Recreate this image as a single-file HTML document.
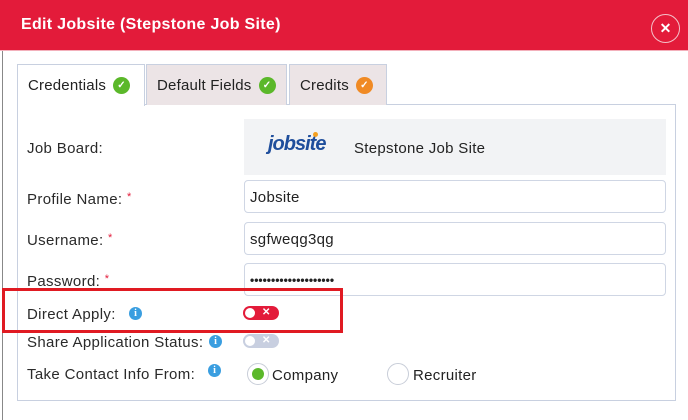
<!DOCTYPE html>
<html><head><style>
*{box-sizing:border-box;margin:0;padding:0}
body{width:688px;height:420px;overflow:hidden;background:#fff;font-family:"Liberation Sans",sans-serif;position:relative;color:#222}
.hdr{position:absolute;left:0;top:0;width:688px;height:51px;background:#e31b3a;border-bottom:1px solid #f3b0bb}
.hdr h1{position:absolute;left:21px;top:16px;color:#fff;font-size:16px;font-weight:bold;letter-spacing:0.3px}
.close{position:absolute;left:651px;top:14px;width:29px;height:29px;border:1px solid #f4c0c8;border-radius:50%;color:#fff;font-weight:bold;font-size:14px;text-align:center;line-height:27px}
.lb{position:absolute;left:2px;top:51px;width:1px;height:369px;background:#888}
.tab{position:absolute;top:64px;height:41px;border:1px solid #c8d0e0;border-bottom:none;background:#ece4e6;font-size:15px;letter-spacing:0.2px;padding:12px 0 0 10px;line-height:18px}
.tab.a{background:#fff;height:42px;z-index:2}
.ck{display:inline-block;width:17px;height:17px;border-radius:50%;background:#5bb82a;color:#fff;font-size:10px;text-align:center;line-height:17px;vertical-align:top;margin-left:7px;font-weight:bold}
.panel{position:absolute;left:17px;top:104px;width:659px;height:297px;border:1px solid #c8d0e0}
.lbl{position:absolute;left:27px;font-size:15px;letter-spacing:0.35px;color:#2a2a2a}
.req{color:#e31b3a;font-size:11px;vertical-align:top}
.inp{position:absolute;left:244px;width:422px;height:33px;border:1px solid #cfd6e4;border-radius:4px;font-size:15px;letter-spacing:0.3px;padding:8px 0 0 5px}
.info{display:inline-block;width:13px;height:13px;border-radius:50%;background:#3a9ee0;color:#fff;font-size:10px;font-weight:bold;text-align:center;line-height:13px;font-family:"Liberation Serif",serif;position:absolute}
.tg{position:absolute;left:243px;width:36px;height:14px;border-radius:7px}
.tg i{position:absolute;left:2px;top:2px;width:10px;height:10px;border-radius:50%;background:#fff}
.tg b{position:absolute;left:19px;top:0px;color:#fff;font-size:10px;line-height:14px}
.rd{position:absolute;width:22px;height:22px;border-radius:50%;border:1px solid #c8cdd8}
</style></head><body>
<div class="hdr"><h1>Edit Jobsite (Stepstone Job Site)</h1><div class="close">✕</div></div>
<div class="lb"></div>
<div class="panel"></div>
<div class="tab a" style="left:17px;width:128px">Credentials<span class="ck">✓</span></div>
<div class="tab" style="left:146px;width:141px">Default Fields<span class="ck">✓</span></div>
<div class="tab" style="left:289px;width:98px">Credits<span class="ck" style="background:#f08a24">✓</span></div>
<div class="lbl" style="top:140px">Job Board:</div>
<div style="position:absolute;left:244px;top:119px;width:422px;height:56px;background:#f2f3f5"></div>
<div style="position:absolute;left:268px;top:133px;font-size:20px;font-weight:bold;font-style:italic;color:#1f4e9c;letter-spacing:-1px">jobsite</div>
<div style="position:absolute;left:313px;top:132px;width:5px;height:5px;border-radius:50%;background:#f5a020"></div>
<div style="position:absolute;left:354px;top:140px;font-size:15px;letter-spacing:0.3px">Stepstone Job Site</div>
<div class="lbl" style="top:191px">Profile Name: <span class="req">*</span></div>
<div class="inp" style="top:180px">Jobsite</div>
<div class="lbl" style="top:232px">Username: <span class="req">*</span></div>
<div class="inp" style="top:222px">sgfweqg3qg</div>
<div class="lbl" style="top:273px">Password: <span class="req">*</span></div>
<div class="inp" style="top:263px;font-size:12px;font-weight:bold;letter-spacing:0px;padding-top:9px">••••••••••••••••••••</div>
<div class="lbl" style="top:306px">Direct Apply:</div><span class="info" style="left:129px;top:307px">i</span>
<div class="tg" style="top:306px;background:#e31b3a"><i></i><b>✕</b></div>
<div class="lbl" style="top:334px">Share Application Status:</div><span class="info" style="left:209px;top:335px">i</span>
<div class="tg" style="top:334px;background:#c8cfe0"><i></i><b>✕</b></div>
<div class="lbl" style="top:366px">Take Contact Info From:</div><span class="info" style="left:208px;top:364px">i</span>
<div class="rd" style="left:247px;top:363px"><div style="position:absolute;left:4px;top:4px;width:12px;height:12px;border-radius:50%;background:#5bb82a"></div></div>
<div style="position:absolute;left:272px;top:367px;font-size:15px;letter-spacing:0.3px">Company</div>
<div class="rd" style="left:387px;top:363px"></div>
<div style="position:absolute;left:413px;top:367px;font-size:15px;letter-spacing:0.3px">Recruiter</div>
<div style="position:absolute;left:2px;top:288px;width:341px;height:45px;border:3px solid #e01a22"></div>
</body></html>
